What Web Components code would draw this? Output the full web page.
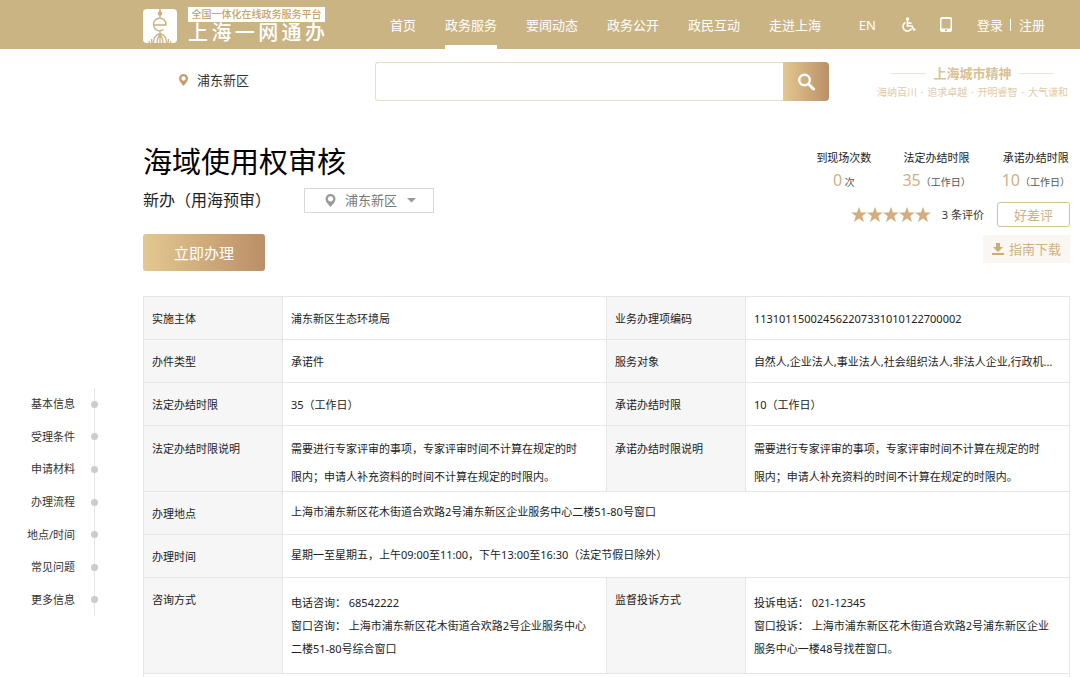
<!DOCTYPE html>
<html lang="zh-CN">
<head>
<meta charset="utf-8">
<meta name="viewport" content="width=device-width, initial-scale=1">
<title>上海一网通办 - 海域使用权审核</title>
<style>
  :root { --gold: #cbb484; --gold-text: #d0b182; --line: #e6e6e6; --grad: linear-gradient(90deg, #e3c891, #bb8f67); --side: 143px; --edge: 10px; }
  body { margin: 0; background: #fff; color: #222; font: 11px/16px "Noto Sans", "Noto Sans CJK SC", sans-serif; }
  .body { display: grid; grid-template-columns: var(--side) minmax(0, 1fr); padding-right: var(--edge); }
  .body item-head { grid-column: 2; }
</style>
</head>
<body>
<site-header>
  <top-link>首页</top-link>
  <top-link active>政务服务</top-link>
  <top-link>要闻动态</top-link>
  <top-link>政务公开</top-link>
  <top-link>政民互动</top-link>
  <top-link>走进上海</top-link>
</site-header>
<search-bar>浦东新区</search-bar>
<main class="body">
  <item-head>
    <span slot="title">海域使用权审核</span>
    <span slot="subtitle">新办（用海预审）</span>
    <stat-item slot="stats" value="0" unit="&nbsp;次">到现场次数</stat-item>
    <stat-item slot="stats" value="35" unit="（工作日）">法定办结时限</stat-item>
    <stat-item slot="stats" value="10" unit="（工作日）">承诺办结时限</stat-item>
  </item-head>
  <side-nav>
    <side-link>基本信息</side-link>
    <side-link>受理条件</side-link>
    <side-link>申请材料</side-link>
    <side-link>办理流程</side-link>
    <side-link>地点/时间</side-link>
    <side-link>常见问题</side-link>
    <side-link>更多信息</side-link>
  </side-nav>
  <info-table></info-table>
</main>

<script>
const define = (name, html, setup) => customElements.define(name, class extends HTMLElement {
  constructor() {
    super();
    const t = document.createElement('template');
    t.innerHTML = html;
    this.attachShadow({ mode: 'open' }).append(t.content.cloneNode(true));
  }
  connectedCallback() { if (setup) setup(this, this.shadowRoot); }
});

define('top-link', `
<style>
  :host { display: flex; }
  a { display: flex; align-items: center; color: #fff; text-decoration: none; font-size: 13px; white-space: nowrap; border-bottom: 4px solid transparent; padding-top: 4px; }
  :host([active]) a { border-color: #fff; }
</style>
<a href="#"><slot></slot></a>`);

define('site-header', `
<style>
  :host { display: flex; height: 49px; background: var(--gold); color: #fff; padding: 0 35px 0 var(--side); font-size: 13px; box-sizing: border-box; }
  .logo { display: flex; align-items: center; gap: 11px; color: #fff; text-decoration: none; padding-top: 2px; }
  .logo svg { width: 34px; height: 34px; }
  .words { width: 137px; }
  .tag { display: block; background: #fff; color: #c3a46d; font: 500 10px/15px "Liberation Sans", "Noto Sans CJK SC", sans-serif; text-align: center; white-space: nowrap; }
  .name { display: block; font: 500 20px/22px "Liberation Sans", "Noto Sans CJK SC", sans-serif; text-align-last: justify; white-space: nowrap; }
  nav { display: flex; gap: 29px; margin-left: 65px; }
  .tools { display: flex; align-items: center; margin-left: auto; }
  .tools a { color: #fff; text-decoration: none; display: flex; white-space: nowrap; }
  .en { margin-right: 25px; }
  .access { margin-right: 24px; }
  .phone { margin-right: 25px; }
  .bar { width: 1px; height: 12px; background: #fff; margin: 0 8px 0 7px; }
</style>
<a class="logo" href="#" aria-label="上海一网通办">
  <svg viewBox="0 0 34 34" aria-hidden="true">
    <rect width="34" height="34" rx="4" fill="#fff"/>
    <g fill="none" stroke="#c9ae79" stroke-width="1.3">
      <path d="M17 0v9M11 16h12a6.300 6.300 0 1 0-2.500 4.500M17 22v4"/>
      <path d="M10.500 34c0-5 2.500-9 6.500-9s6.500 4 6.500 9M14 34c0-3 1-6 3-8 2 2 3 5 3 8M17 26v8M6.500 34l-.5-2M9 34l-.5-4M25 34l.5-4M27.500 34l.5-2"/>
    </g>
    <circle cx="17" cy="4.500" r="2.200" fill="#c9ae79"/>
  </svg>
  <span class="words"><span class="tag">全国一体化在线政务服务平台</span><span class="name">上海一网通办</span></span>
</a>
<nav><slot></slot></nav>
<div class="tools">
  <a class="en" href="#">EN</a>
  <a class="access" href="#" aria-label="无障碍"><svg width="15" height="16" viewBox="0 0 15 16" fill="none" stroke="#fff" stroke-width="1.700"><circle cx="6.500" cy="2" r="1.700" fill="#fff" stroke="none"/><path d="M6.500 3v6h4.500l2 4 1.500-.7M10.500 6.200H6.500M4.500 5.500a4.500 4.500 0 1 0 6 6"/></svg></a>
  <a class="phone" href="#" aria-label="手机版"><svg width="12" height="15" viewBox="0 0 12 15"><path fill="#fff" fill-rule="evenodd" d="M2 0h8a2 2 0 0 1 2 2v11a2 2 0 0 1-2 2H2a2 2 0 0 1-2-2V2a2 2 0 0 1 2-2zM1.500 2v9.500h9V2zM6 12.300a1 1 0 1 0 .01 0z"/></svg></a>
  <a href="#">登录</a><span class="bar"></span><a href="#">注册</a>
</div>`);

define('search-bar', `
<style>
  :host { display: grid; grid-template-columns: 196px minmax(0, 1fr) auto; padding: 13px 12px 0 179px; }
  .place { display: flex; align-items: center; gap: 9px; font-size: 13px; color: #333; height: 36px; }
  form { display: flex; height: 39px; margin: 0 48px 0 0; }
  input { flex: 1; min-width: 0; box-sizing: border-box; border: 1px solid #e8dfc9; border-right: 0; border-radius: 3px 0 0 3px; background: #fff; padding: 0 12px; font: 13px/20px "Noto Sans CJK SC", sans-serif; outline: 0; }
  button { width: 46px; border: 0; padding: 0; border-radius: 0 4px 4px 0; background: var(--grad); display: grid; place-items: center; }
  .slogan { color: #dfcba7; white-space: nowrap; width: 191px; }
  .top { display: flex; justify-content: center; align-items: center; gap: 7px; font: 700 13px/22px "Noto Sans CJK SC", sans-serif; color: #d9c195; }
  .top i { width: 35px; height: 1px; background: #efe6d5; }
  .values { display: flex; justify-content: space-between; font: 10px/17px "Noto Sans", "Noto Sans CJK SC", sans-serif; }
</style>
<div class="place">
  <svg width="9" height="12" viewBox="0 0 9 12"><path fill="#c69c6d" fill-rule="evenodd" d="M4.500 0a4.500 4.500 0 0 1 4.500 4.500C9 7 6.500 9.500 4.500 12 2.500 9.500 0 7 0 4.500A4.500 4.500 0 0 1 4.500 0zm0 2.300a2.200 2.200 0 1 0 .01 0z"/></svg>
  <span><slot></slot></span>
</div>
<form role="search"><input type="search" aria-label="搜索"><button type="button" aria-label="搜索"><svg width="18" height="18" viewBox="0 0 18 18" fill="none" stroke="#fff"><circle cx="7.500" cy="7" r="5.300" stroke-width="2.400"/><path d="M11.500 11l5 5" stroke-width="3" stroke-linecap="round"/></svg></button></form>
<div class="slogan"><div class="top"><i></i><span>上海城市精神</span><i></i></div><div class="values"><span>海纳百川</span><span>·</span><span>追求卓越</span><span>·</span><span>开明睿智</span><span>·</span><span>大气谦和</span></div></div>`);

define('stat-item', `
<style>
  :host { display: block; text-align: center; white-space: nowrap; font-size: 11px; line-height: 23px; color: #222; }
  .v { font-size: 10px; display: flex; justify-content: center; align-items: baseline; color: #555; }
  b { font-weight: 400; font-size: 16px; color: var(--gold-text); }
</style>
<div><slot></slot></div><div class="v"><b></b><span></span></div>`,
(el, root) => {
  root.querySelector('b').textContent = el.getAttribute('value');
  root.querySelector('.v span').textContent = el.getAttribute('unit');
});

define('star-rating', `
<style>:host, div { display: flex; } svg { width: 16px; height: 16px; }</style>
<div role="img" aria-label="五星"></div>`,
(el, root) => {
  root.querySelector('div').innerHTML = '<svg viewBox="0 0 16 16"><path fill="#d2ae7d" d="M8 0l2 5.500h6l-4.800 3.600 1.800 5.900L8 11.500 3 15l1.800-5.900L0 5.500h6z"/></svg>'.repeat(5);
});

define('item-head', `
<style>
  :host { display: flex; justify-content: space-between; padding-top: 37px; height: 158px; }
  h1 { margin: 0; font: 400 29px/44px "Noto Sans CJK SC", sans-serif; color: #000; }
  .sub { display: flex; align-items: center; gap: 33px; height: 36px; }
  h2 { margin: 0; font-size: 16px; line-height: 24px; font-weight: 400; color: #222; white-space: nowrap; }
  .pick { display: grid; width: 130px; height: 25px; align-items: center; border: 1px solid #d8d8d8; box-sizing: border-box; color: #999; }
  .pick > * { grid-area: 1 / 1; }
  .pick svg { pointer-events: none; }
  .pin { margin-left: 20px; }
  .caret { justify-self: end; margin-right: 17px; }
  select { appearance: none; border: 0; background: none; width: 100%; height: 23px; padding: 0 28px 0 40px; margin: 0; color: #777; font: 13px/20px "Noto Sans CJK SC", sans-serif; }
  .go { display: block; margin-top: 16px; width: 122px; height: 37px; border: 0; padding: 0; border-radius: 3px; background: var(--grad); color: #fff; font: 15px/20px "Noto Sans CJK SC", sans-serif; }
  .right { display: flex; flex-direction: column; align-items: flex-end; margin-top: 8px; }
  .stats { display: flex; gap: 31px; }
  .rate { display: flex; align-items: center; margin-top: 8px; white-space: nowrap; }
  .count { margin: 0 13px 0 11px; color: #333; }
  .review { width: 73px; height: 25px; border: 1px solid #d9c08f; border-radius: 3px; background: #fff; color: var(--gold-text); padding: 0; font: 13px/20px "Noto Sans CJK SC", sans-serif; box-sizing: border-box; }
  .guide { display: flex; align-items: center; justify-content: center; gap: 5px; width: 87px; height: 28px; margin-top: 8px; background: #faf7f2; color: var(--gold-text); font-size: 13px; text-decoration: none; white-space: nowrap; }
</style>
<div>
  <h1><slot name="title"></slot></h1>
  <div class="sub">
    <h2><slot name="subtitle"></slot></h2>
    <div class="pick">
      <select aria-label="区域"><option>浦东新区</option></select>
      <svg class="pin" width="11" height="13" viewBox="0 0 11 13"><path fill="#999" fill-rule="evenodd" d="M5.500 0A5 5 0 0 1 10.500 5c0 3-3 5.500-5 8-2-2.500-5-5-5-8A5 5 0 0 1 5.500 0zm0 2.200a2.700 2.700 0 1 0 .01 0z"/></svg>
      <svg class="caret" width="9" height="5" viewBox="0 0 9 5"><path fill="#999" d="M0 0h9L4.500 4.500z"/></svg>
    </div>
  </div>
  <button class="go" type="button">立即办理</button>
</div>
<div class="right">
  <div class="stats"><slot name="stats"></slot></div>
  <div class="rate"><star-rating></star-rating><span class="count">3 条评价</span><button class="review" type="button">好差评</button></div>
  <a class="guide" href="#"><svg width="12" height="12" viewBox="0 0 12 12" fill="#cbab78"><path d="M4 0h4v4h3L6 9 1 4h3zM0 10h12v2H0z"/></svg><span>指南下载</span></a>
</div>`);

define('side-link', `
<style>
  :host { display: flex; flex: 1; align-items: center; justify-content: flex-end; }
  a { display: flex; align-items: center; gap: 16px; color: #333; text-decoration: none; white-space: nowrap; }
  a::after { content: ""; width: 7px; height: 7px; border-radius: 50%; background: #ccc; }
</style>
<a href="#"><slot></slot></a>`);

define('side-nav', `
<style>
  :host { display: block; padding: 92px 45px 0 0; }
  nav { display: flex; flex-direction: column; height: 228px; background: linear-gradient(#e6e6e6, #e6e6e6) right 3px top / 1px 100% no-repeat; }
</style>
<nav aria-label="页内导航"><slot></slot></nav>`);

define('info-table', `
<style>
  :host { display: block; }
  table { width: 100%; table-layout: fixed; border-collapse: collapse; color: #222; }
  col.k { width: 15%; } col.v { width: 35%; }
  th, td { box-sizing: border-box; height: 43px; border: 1px solid var(--line); padding: 8px 8px 0; text-align: left; vertical-align: top; font-weight: 400; line-height: 28px; }
  th { background: #f6f6f6; }
  tr.two > * { height: 66px; padding-top: 9px; }
  tr.wide td { padding-top: 6px; }
  tr.contact > * { height: 96px; }
  tr.contact td { line-height: 23px; padding-top: 13px; }
  .clip { white-space: nowrap; overflow: hidden; text-overflow: ellipsis; }
  tr.next td { height: 3px; padding: 0; border-bottom: 0; }
</style>
<table>
  <colgroup><col class="k"><col class="v"><col class="k"><col class="v"></colgroup>
  <tbody>
  <tr><th scope="row">实施主体</th><td>浦东新区生态环境局</td><th scope="row">业务办理项编码</th><td>113101150024562207331010122700002</td></tr>
  <tr><th scope="row">办件类型</th><td>承诺件</td><th scope="row">服务对象</th><td class="clip">自然人,企业法人,事业法人,社会组织法人,非法人企业,行政机...</td></tr>
  <tr><th scope="row">法定办结时限</th><td>35（工作日）</td><th scope="row">承诺办结时限</th><td>10（工作日）</td></tr>
  <tr class="two"><th scope="row">法定办结时限说明</th><td>需要进行专家评审的事项，专家评审时间不计算在规定的时<br>限内；申请人补充资料的时间不计算在规定的时限内。</td><th scope="row">承诺办结时限说明</th><td>需要进行专家评审的事项，专家评审时间不计算在规定的时<br>限内；申请人补充资料的时间不计算在规定的时限内。</td></tr>
  <tr class="wide"><th scope="row">办理地点</th><td colspan="3">上海市浦东新区花木街道合欢路2号浦东新区企业服务中心二楼51-80号窗口</td></tr>
  <tr class="wide"><th scope="row">办理时间</th><td colspan="3">星期一至星期五，上午09:00至11:00，下午13:00至16:30（法定节假日除外）</td></tr>
  <tr class="contact"><th scope="row">咨询方式</th><td>电话咨询： 68542222<br>窗口咨询： 上海市浦东新区花木街道合欢路2号企业服务中心<br>二楼51-80号综合窗口</td><th scope="row">监督投诉方式</th><td>投诉电话： 021-12345<br>窗口投诉： 上海市浦东新区花木街道合欢路2号浦东新区企业<br>服务中心一楼48号找茬窗口。</td></tr>
  <tr class="next"><td colspan="4"></td></tr>
  </tbody>
</table>`);
</script>
</body>
</html>
